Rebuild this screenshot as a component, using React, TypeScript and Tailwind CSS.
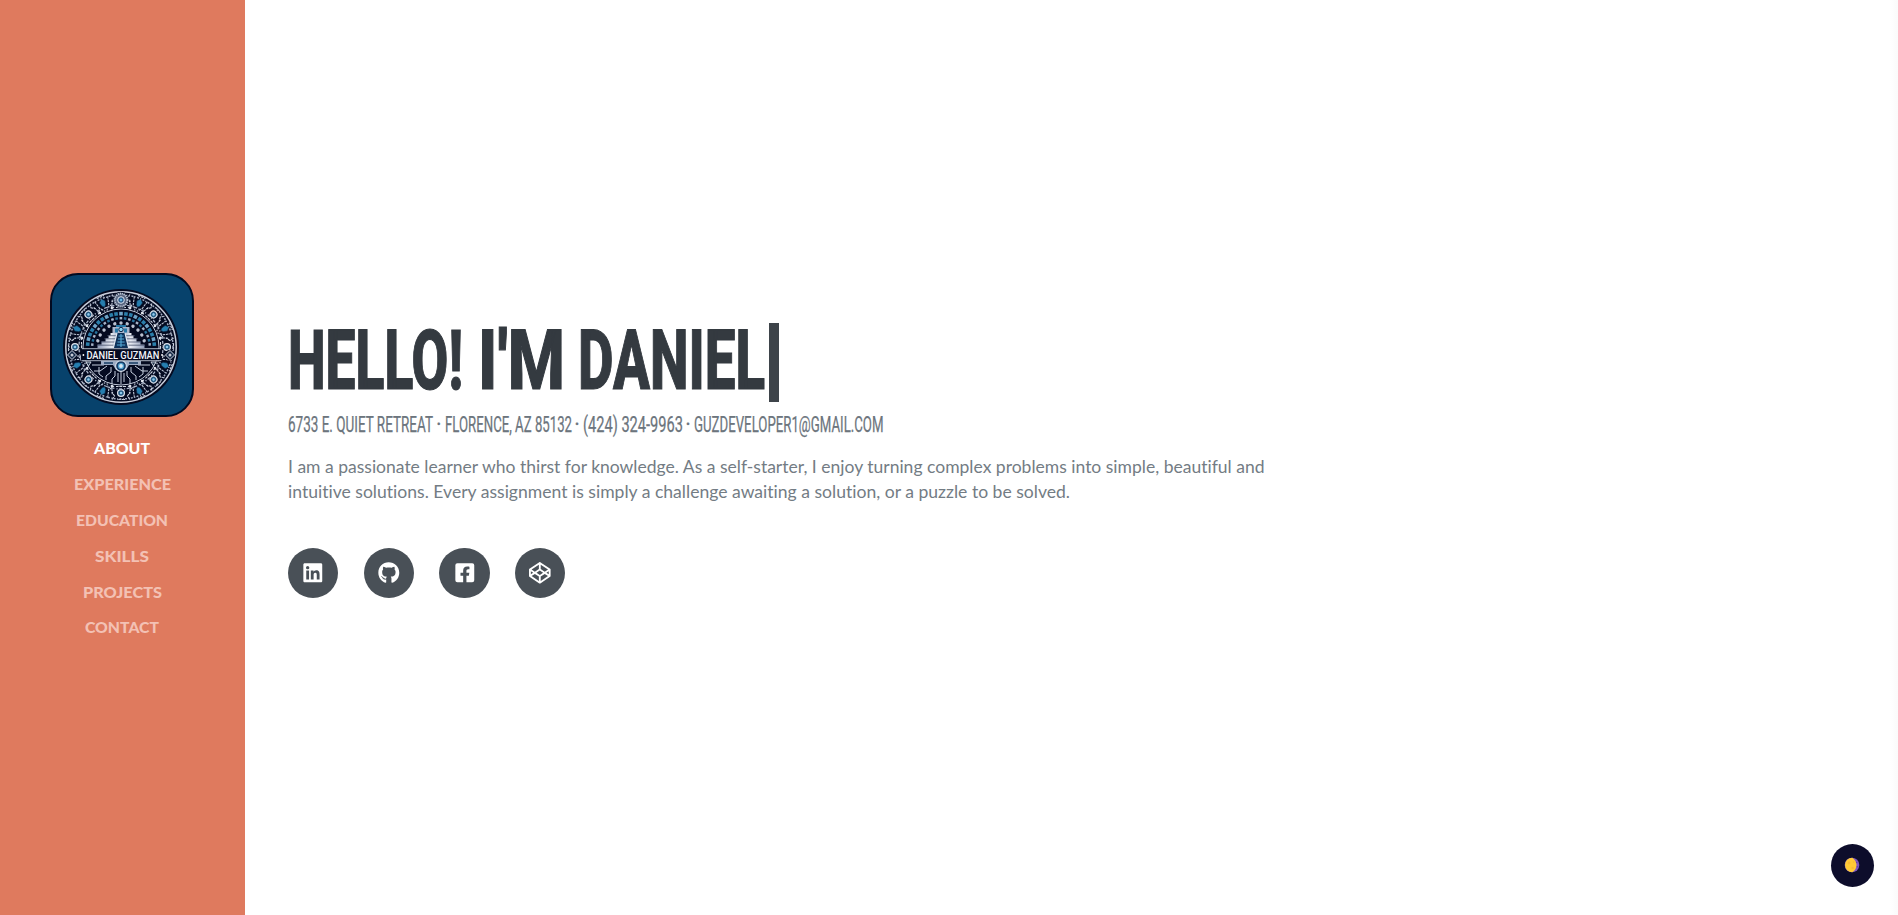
import { useLayoutEffect, useRef, useState } from "react";
import { FaLinkedin, FaGithub, FaFacebookSquare, FaCodepen } from "react-icons/fa";

/** One line of text, stretched or condensed horizontally to a given width. */
function FitText({ text, width, className = "" }: { text: string; width: number; className?: string }) {
  const ref = useRef<HTMLSpanElement>(null);
  const [scale, setScale] = useState(1);
  useLayoutEffect(() => {
    if (ref.current) setScale(width / ref.current.getBoundingClientRect().width);
  }, []);
  return (
    <span className="block" style={{ width }}>
      <span
        ref={ref}
        className={"inline-block origin-left whitespace-nowrap " + className}
        style={{ transform: `scaleX(${scale})` }}
      >
        {text}
      </span>
    </span>
  );
}

const navItems = [
  { label: "ABOUT", width: 56 },
  { label: "EXPERIENCE", width: 97 },
  { label: "EDUCATION", width: 92 },
  { label: "SKILLS", width: 54 },
  { label: "PROJECTS", width: 79 },
  { label: "CONTACT", width: 74 },
];

const range = (n: number) => Array.from({ length: n }, (_, i) => i);

function Emblem() {
  return (
    <svg viewBox="0 0 144 144" className="block h-36 w-36">
      <defs>
        <linearGradient id="steps" x1="0" x2="1">
          <stop offset="0" stopColor="#8f9ab5" />
          <stop offset="0.3" stopColor="#e8ebf3" />
          <stop offset="0.5" stopColor="#8fa3c4" />
          <stop offset="0.7" stopColor="#e8ebf3" />
          <stop offset="1" stopColor="#8f9ab5" />
        </linearGradient>
        <clipPath id="lower">
          <rect x="14" y="88" width="114" height="46" />
        </clipPath>
      </defs>
      <rect x="1" y="1" width="142" height="142" rx="27" fill="#07426c" stroke="#020a20" strokeWidth="2" />
      <circle cx="71" cy="74" r="58" fill="#040a20" />
      <circle cx="71" cy="74" r="55.2" fill="none" stroke="#c9cedb" strokeWidth="1.5" />
      {/* outer ornamental band */}
      {range(16).map((i) => (
        <g key={i} transform={`rotate(${i * 22.5} 71 74)`}>
          {i % 2 === 0 ? (
            <g>
              <circle cx="71" cy="28" r="3.4" fill="#245a83" stroke="#dfe3ec" strokeWidth="1.2" />
              <circle cx="71" cy="28" r="1.3" fill="#8cc9ec" />
              <path d="M62 21.5 64.5 25 62 29M80 21.5 77.5 25 80 29M66 34.5h10M60 32l4 3M82 32l-4 3M67 21.5h8" fill="none" stroke="#d0d5e1" strokeWidth="1.1" strokeDasharray="3 .7" />
            </g>
          ) : (
            <g>
              <path d="M68 25 71 22 74 25 73 29 71 31 69 29Z" fill="#267eaf" stroke="#0a2847" strokeWidth=".6" />
              <path d="m64 22 2 8 4 5m8-13-2 8-4 5M67 20h8M61 27l3 6M81 27l-3 6" fill="none" stroke="#c2cad9" strokeWidth="1.1" strokeDasharray="2.5 .8" />
              <circle cx="64.5" cy="34.5" r="1.3" fill="#e3e7ef" />
              <circle cx="77.5" cy="34.5" r="1.3" fill="#e3e7ef" />
            </g>
          )}
        </g>
      ))}
      <circle cx="71" cy="74" r="52" fill="none" stroke="#a3adc2" strokeWidth="1.5" strokeDasharray="2 1.2 1 1.6" />
      <circle cx="71" cy="74" r="42" fill="none" stroke="#aab4c8" strokeWidth="1.3" strokeDasharray="1.2 2 3 1.5" />
      {/* inner disc */}
      <circle cx="71" cy="74" r="38" fill="#040a20" stroke="#c1c9d8" strokeWidth="1" />
      {range(21).map((i) => (
        <g key={i} transform={`rotate(${-85 + i * 8.5} 71 74)`}>
          <rect x="69.2" y="38.8" width="3.6" height="3.6" fill={i % 3 === 1 ? "#6fa5c8" : "#2b7fab"} />
          <rect x="69.6" y="44" width="2.6" height="2.4" fill={i % 2 ? "#28739d" : "#a7b4c8"} />
        </g>
      ))}
      {range(11).map((i) => (
        <circle key={i} transform={`rotate(${-75 + i * 15} 71 74)`} cx="71" cy="50" r="1.7" fill="#b9c0cf" />
      ))}
      {/* sun medallion at the top */}
      <circle cx="71" cy="27" r="8.2" fill="#081229" />
      <circle cx="71" cy="27" r="6.4" fill="#56637d" stroke="#b7c0d0" strokeWidth="2" strokeDasharray="1.4 .6" />
      <circle cx="71" cy="27" r="3.3" fill="#2d5f8e" stroke="#dfe4ed" strokeWidth="1" />
      <circle cx="71" cy="27" r="1.2" fill="#68bde8" />
      {/* pyramid */}
      <path d="M60 59h22l14 17H46Z" fill="#040a20" />
      <path d="M60.5 60h21v2.2h2v3h3v3.2h4v3h4V75H47.5v-3.6h4v-3h4v-3.2h3v-3h2Z" fill="url(#steps)" />
      <path d="M57 62.7h28M54 65.8h34M51 69h40M48 72.2h46" stroke="#39445f" strokeWidth=".7" />
      <path d="M67 60h8l3.5 15h-15Z" fill="#0d315a" />
      <path d="m67 60-3.6 15M75 60l3.6 15" stroke="#e4e9f2" strokeWidth="1.1" />
      <path d="M71 61v13M68.5 63h5M68 66h6M67.4 69h7.2M66.8 72h8.4" stroke="#54a9d7" strokeWidth="1.1" />
      <path d="M62.5 54h17v6h-17Z" fill="#aab6cc" />
      <path d="M66 52h10v2H66ZM65 55.5h3v4h-3ZM74 55.5h3v4h-3Z" fill="#2778a8" />
      <circle cx="71" cy="56.5" r="2.2" fill="#8ed0ef" stroke="#092447" />
      {/* circuit traces */}
      <g clipPath="url(#lower)" fill="none" stroke="#c5cede" strokeWidth="1">
        <path d="M71 98v13M68 100v9M74 100v9M65 98v5l-3 3v5M77 98v5l3 3v5M61 94v5l-5 4v4M81 94v5l5 4v4M57 93l-7 5h-6M85 93l7 5h6M54 92H42M88 92h12M49 94v7l4 3M93 94v7l-4 3" />
      </g>
      <path d="M51 88h40v4H79l-3 5H66l-3-5H51Z" fill="#9eacc4" />
      <path d="M54 90h9M79 90h9" stroke="#163b63" strokeWidth="1.4" />
      <circle cx="71" cy="93" r="5.4" fill="#183e69" stroke="#d8e0eb" strokeWidth="1.1" />
      <circle cx="71" cy="93" r="2.5" fill="#dae7f3" stroke="#4da1d0" strokeWidth="1.2" />
      <path d="M36 89h5l-2.5 4ZM101 89h5l-2.5 4Z" fill="#26374e" stroke="#d4d9e4" strokeWidth=".9" />
      {/* side rosettes */}
      {[22, 120].map((x) => (
        <g key={x}>
          <circle cx={x} cy="82" r="5.2" fill="#071128" />
          <path d={`M${x} 77.5l4.5 4.5-4.5 4.5-4.5-4.5Z`} fill="#172b49" stroke="#d5dae5" />
          <circle cx={x} cy="82" r="1.5" fill="#c8ccd6" />
        </g>
      ))}
      {/* name banner */}
      <path d="M31 76h81v11.5H31Z" fill="#040a20" />
      <path d="M32 75.7h79M32 87.7h79" stroke="#bec6d4" strokeWidth=".9" />
      <circle cx="33.4" cy="82" r=".9" fill="#fff" />
      <circle cx="112" cy="82" r=".9" fill="#fff" />
      <text
        x="36.4"
        y="85.6"
        textLength="73"
        lengthAdjust="spacingAndGlyphs"
        fill="#f5f6fa"
        fontFamily="Roboto, sans-serif"
        fontWeight="500"
        fontSize="10.4"
      >
        DANIEL GUZMAN
      </text>
    </svg>
  );
}

function Moon() {
  return (
    <svg viewBox="0 0 16 16" className="-mt-px -ml-px h-4 w-4">
      <circle cx="8" cy="8" r="7.3" fill="#7e57c2" />
      <path d="M8.3.7A7.3 7.3 0 1 0 8.3 15.3Q12.6 12.2 12.5 8T8.3.7Z" fill="#ffca35" />
      <circle cx="5" cy="6" r="1.4" fill="#f9b934" />
      <circle cx="8.6" cy="10.9" r="1.2" fill="#f9b934" />
      <circle cx="9.7" cy="5" r=".8" fill="#f9b934" />
      <circle cx="12.6" cy="5.5" r=".7" fill="#5e3fa6" />
      <circle cx="13.3" cy="9.8" r=".7" fill="#5e3fa6" />
    </svg>
  );
}

export default function App() {
  return (
    <div className="flex h-[915px] bg-white font-['Lato',sans-serif] [font-variant-ligatures:none]">
      <aside className="flex w-[245px] flex-col items-center bg-[#df7a5e] pt-[273px]">
        <div className="-ml-px">
          <Emblem />
        </div>
        <nav className="mt-[13px] -ml-px flex flex-col items-center">
          {navItems.map((item, i) => (
            <a key={item.label} className={"block h-[35.9px] text-[15.3px] leading-9 font-black " + (i === 0 ? "text-white" : "text-[#f3c1b4]")}>
              <FitText text={item.label} width={item.width} />
            </a>
          ))}
        </nav>
      </aside>

      <main className="flex-1 pt-[316px] pl-[43px]">
        <h1 className="flex h-[86px] items-start font-['Roboto',sans-serif] text-[83px] leading-[89px] font-extrabold text-[#343a40] [-webkit-text-stroke:1.2px_#343a40]">
          <FitText text="HELLO!" width={175} />
          <span className="ml-[15px]">
            <FitText text="I'M" width={87} />
          </span>
          <span className="ml-[13px]">
            <FitText text="DANIEL" width={187} />
          </span>
          <span className="mt-[7px] ml-[4px] h-[79px] w-[9.5px] bg-[#3e444a]" />
        </h1>
        <div className="mt-[9px] flex font-['Roboto',sans-serif] text-[21.4px] leading-7 text-[#6c757d] [-webkit-text-stroke:0.25px_#6c757d]">
          <FitText text="6733 E. QUIET RETREAT" width={145} />
          <span className="w-[11.5px] text-center">·</span>
          <FitText text="FLORENCE, AZ 85132" width={127} />
          <span className="w-[11px] text-center">·</span>
          <FitText text="(424) 324-9963" width={100} />
          <span className="w-[11px] text-center">·</span>
          <FitText text="GUZDEVELOPER1@GMAIL.COM" width={189.5} />
        </div>
        <p className="mt-[15px] text-[17px] leading-[25.4px] text-[#737c84]">
          <FitText text="I am a passionate learner who thirst for knowledge. As a self-starter, I enjoy turning complex problems into simple, beautiful and" width={976.5} />
          <FitText text="intuitive solutions. Every assignment is simply a challenge awaiting a solution, or a puzzle to be solved." width={782} />
        </p>
        <div className="mt-[43px] flex gap-[25.3px] text-[21.6px] text-white">
          {[FaLinkedin, FaGithub, FaFacebookSquare, FaCodepen].map((Icon, i) => (
            <a key={i} className="flex h-[50.4px] w-[50.4px] items-center justify-center rounded-full bg-[#495057]">
              <Icon />
            </a>
          ))}
        </div>
      </main>

      <div className="w-2 bg-linear-to-r from-white to-[#fafafa]" />
      <button className="absolute top-[844px] left-[1831px] flex h-[43px] w-[43px] items-center justify-center rounded-full bg-[#0d0d2b]">
        <Moon />
      </button>
    </div>
  );
}
